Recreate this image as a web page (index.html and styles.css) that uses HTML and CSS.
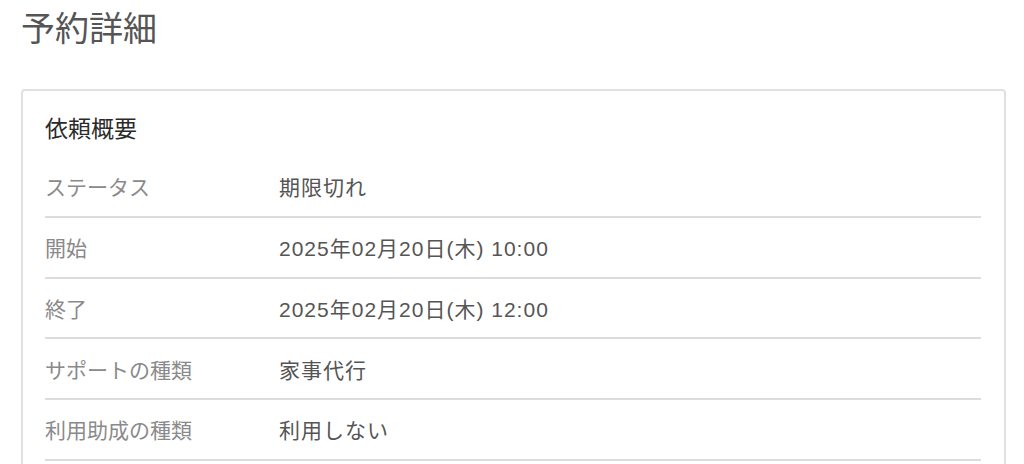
FILE: index.html
```html
<!DOCTYPE html>
<html lang="ja">
<head>
<meta charset="utf-8">
<title>予約詳細</title>
<link rel="stylesheet" href="styles.css">
</head>
<body>
<main class="page">
  <h1 class="page-title">予約詳細</h1>
  <section class="card">
    <h2 class="card-title">依頼概要</h2>
    <dl class="detail-list">
      <div class="detail-row"><dt>ステータス</dt><dd>期限切れ</dd></div>
      <div class="detail-row"><dt>開始</dt><dd>2025年02月20日(木) 10:00</dd></div>
      <div class="detail-row"><dt>終了</dt><dd>2025年02月20日(木) 12:00</dd></div>
      <div class="detail-row"><dt>サポートの種類</dt><dd>家事代行</dd></div>
      <div class="detail-row"><dt>利用助成の種類</dt><dd>利用しない</dd></div>
    </dl>
  </section>
</main>
</body>
</html>
```

FILE: styles.css
```css
html, body {
  margin: 0;
  padding: 0;
  background: #fff;
}
body {
  font-family: "Liberation Sans", "Noto Sans CJK JP", sans-serif;
  overflow: hidden;
  height: 464px;
}
.page {
  padding: 0 18px 0 21px;
}
.page-title {
  margin: 0;
  padding: 6px 0 0 0;
  font-size: 34px;
  line-height: 46px;
  font-weight: 400;
  color: #555;
}
.card {
  margin-top: 37px;
  border: 2px solid #e0e0e0;
  border-radius: 4px;
  padding: 22px 23px 30px 22px;
}
.card-title {
  margin: 0 0 12px;
  font-size: 23px;
  line-height: 32px;
  font-weight: 400;
  color: #2a2a2a;
}
.detail-list {
  margin: 0;
}
.detail-row {
  display: flex;
  align-items: center;
  height: 58.75px;
  border-bottom: 2px solid #dcdcdc;
  font-size: 21px;
}
.detail-row dt {
  width: 234px;
  flex: none;
  color: #8a8a8a;
}
.detail-row dd {
  margin: 0;
  color: #555;
  letter-spacing: 1px;
}
```
